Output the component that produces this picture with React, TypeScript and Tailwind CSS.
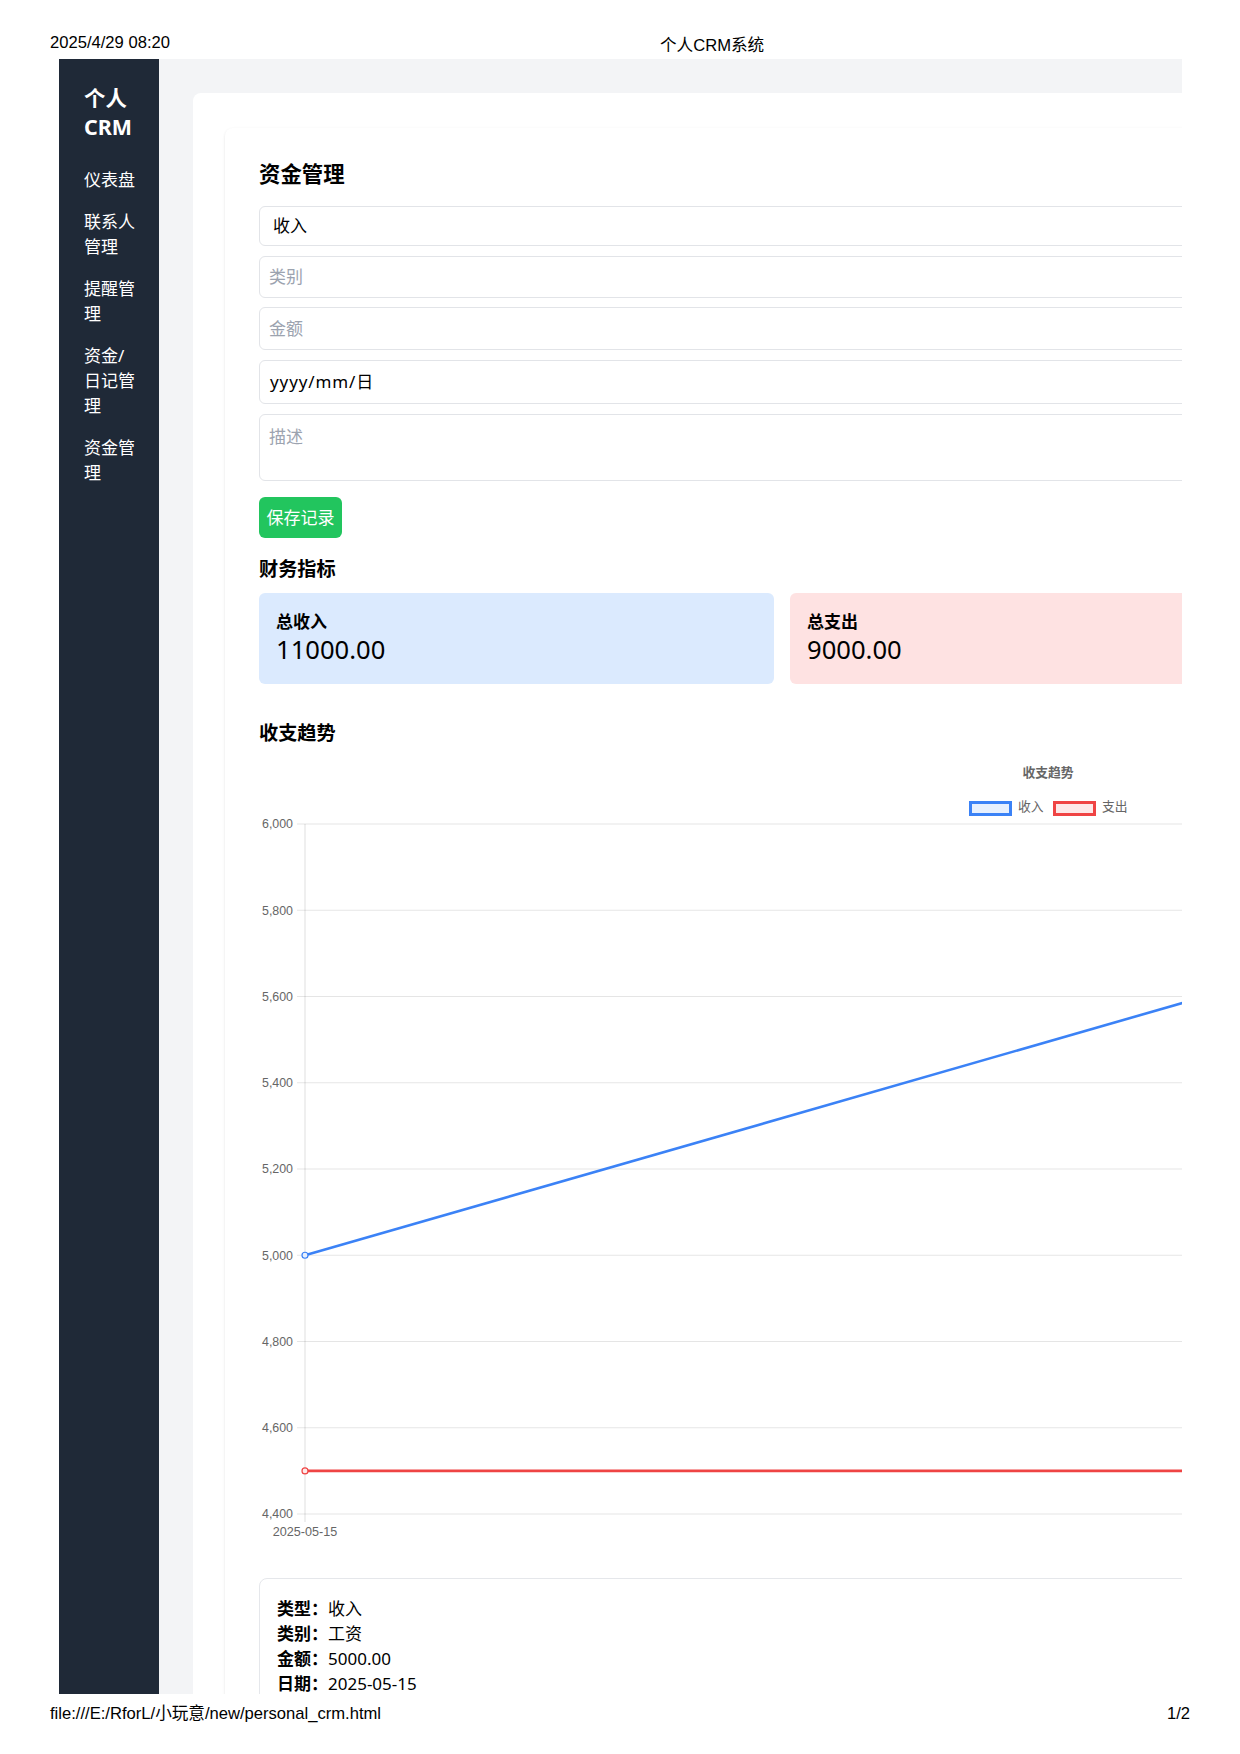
const navItems = [['仪表盘'], ['联系人', '管理'], ['提醒管', '理'], ['资金/', '日记管', '理'], ['资金管', '理']]

const yTicks = [6000, 5800, 5600, 5400, 5200, 5000, 4800, 4600, 4400]
const yOf = (v: number) => 67 + (6000 - v) * 0.43125

function TrendChart() {
  const x0 = 46
  const x1 = 1546
  return (
    <svg width="1578" height="790" viewBox="0 0 1578 790" className="block" fontFamily="'Liberation Sans', 'Noto Sans CJK SC', sans-serif">
      <text x="789" y="17" textAnchor="middle" dominantBaseline="middle" fontSize="12.8" fontWeight="bold" fill="#666">
        收支趋势
      </text>
      <rect x="711.5" y="45.5" width="40" height="12" fill="rgba(59,130,246,0.12)" stroke="#3b82f6" strokeWidth="3" />
      <text x="759" y="51" dominantBaseline="middle" fontSize="12.8" fill="#666">
        收入
      </text>
      <rect x="795.5" y="45.5" width="40" height="12" fill="rgba(239,68,68,0.12)" stroke="#ef4444" strokeWidth="3" />
      <text x="843" y="51" dominantBaseline="middle" fontSize="12.8" fill="#666">
        支出
      </text>

      {yTicks.map((v) => (
        <g key={v}>
          <line x1="38" x2="1578" y1={yOf(v)} y2={yOf(v)} stroke="rgba(0,0,0,0.1)" strokeWidth="1" />
          <text x="34" y={yOf(v) + 1} textAnchor="end" dominantBaseline="middle" fontSize="12.4" fill="#666">
            {v.toLocaleString('en-US')}
          </text>
        </g>
      ))}
      <line x1={x0} x2={x0} y1="67" y2="765" stroke="rgba(0,0,0,0.13)" strokeWidth="1" />
      <text x={x0} y="776" textAnchor="middle" dominantBaseline="middle" fontSize="12.6" fill="#666">
        2025-05-15
      </text>

      <line x1={x0} y1={yOf(5000)} x2={x1} y2={yOf(6000)} stroke="#3b82f6" strokeWidth="2.6" />
      <line x1={x0} y1={yOf(4500)} x2={x1} y2={yOf(4500)} stroke="#ef4444" strokeWidth="2.8" />
      <circle cx={x0} cy={yOf(5000)} r="3" fill="#e8f0fe" stroke="#3b82f6" strokeWidth="1.2" />
      <circle cx={x0} cy={yOf(4500)} r="3" fill="#fdeaea" stroke="#ef4444" strokeWidth="1.2" />
    </svg>
  )
}

export default function App() {
  return (
    <div className="w-[1240px] h-[1754px] bg-white overflow-hidden text-black font-['Liberation_Sans','Noto_Sans_CJK_SC',sans-serif]">
      <header className="h-[59px] flex items-start pl-[50px] pt-[34px] text-[16.6px] leading-[18px]">
        <span className="w-[610px]">2025/4/29 08:20</span>
        <span className="mt-[3px]">个人CRM系统</span>
      </header>

      <div className="ml-[59px] w-[1123px] h-[1635px] overflow-hidden flex font-['Noto_Sans','Noto_Sans_CJK_SC',sans-serif]">
        <aside className="w-[100px] shrink-0 bg-[#1f2937] text-white pl-[25px] pt-[25px] whitespace-nowrap">
          <div className="text-[21.4px] font-bold leading-[28.5px]">
            个人
            <br />
            CRM
          </div>
          <nav className="mt-[26px] flex flex-col gap-[17px] text-[17px] leading-[25px]">
            {navItems.map((lines, i) => (
              <a key={i} className="block">
                {lines.map((l, j) => (
                  <span key={j} className="block">
                    {l}
                  </span>
                ))}
              </a>
            ))}
          </nav>
        </aside>

        <main className="w-[1280px] shrink-0 bg-[#f3f4f6] pl-[34px] pt-[34px]">
          <div className="bg-white rounded-lg pl-[32px] pt-[35px] pr-[32px] pb-8">
            <section className="w-[1114px] rounded-lg bg-white shadow-sm px-[34px] pt-[32px] pb-10">
              <h2 className="text-[21.4px] font-bold leading-[28px] mb-[18px]">资金管理</h2>

              <div className="h-[40px] flex items-center pl-[13px] border border-[#e2e4e8] rounded-md text-[17px]">收入</div>
              <div className="mt-[10px] h-[42px] flex items-center pl-[9px] border border-[#e2e4e8] rounded-md text-[17px] text-[#9ca3af]">
                类别
              </div>
              <div className="mt-[9px] h-[43px] flex items-center pl-[9px] border border-[#e2e4e8] rounded-md text-[17px] text-[#9ca3af]">
                金额
              </div>
              <div className="mt-[10px] h-[44px] flex items-center pl-[10px] border border-[#e2e4e8] rounded-md text-[17px] tracking-[0.9px]">
                yyyy/mm/日
              </div>
              <div className="mt-[10px] h-[67px] pl-[9px] pt-[10px] leading-[24px] border border-[#e2e4e8] rounded-md text-[17px] text-[#9ca3af]">
                描述
              </div>

              <button className="mt-[16px] h-[41px] w-[83px] flex items-center justify-center bg-[#22c55e] rounded-md text-white text-[17px]">
                保存记录
              </button>

              <h3 className="mt-[17px] text-[19.2px] font-bold leading-[28px] mb-[10px]">财务指标</h3>
              <div className="grid grid-cols-2 gap-[16px]">
                <div className="h-[91px] rounded-md bg-[#dbeafe] pl-[17px] pt-[17px]">
                  <div className="text-[17px] font-bold leading-[24px]">总收入</div>
                  <div className="text-[25.6px] leading-[31px]">11000.00</div>
                </div>
                <div className="h-[91px] rounded-md bg-[#fee2e2] pl-[17px] pt-[17px]">
                  <div className="text-[17px] font-bold leading-[24px]">总支出</div>
                  <div className="text-[25.6px] leading-[31px]">9000.00</div>
                </div>
              </div>

              <h3 className="mt-[35px] text-[19.2px] font-bold leading-[28px] mb-[10px]">收支趋势</h3>
              <TrendChart />

              <div className="mt-[31px] border border-[#e5e7eb] rounded-lg pl-[17px] pt-[17px] pb-[60px] text-[17px] leading-[25px]">
                <p>
                  <b>类型：</b>收入
                </p>
                <p>
                  <b>类别：</b>工资
                </p>
                <p>
                  <b>金额：</b>5000.00
                </p>
                <p>
                  <b>日期：</b>2025-05-15
                </p>
              </div>
            </section>
          </div>
        </main>
      </div>

      <footer className="flex justify-between pl-[50px] pr-[50px] pt-[11px] text-[16.6px] leading-[18px]">
        <span>file:///E:/RforL/小玩意/new/personal_crm.html</span>
        <span>1/2</span>
      </footer>
    </div>
  )
}
